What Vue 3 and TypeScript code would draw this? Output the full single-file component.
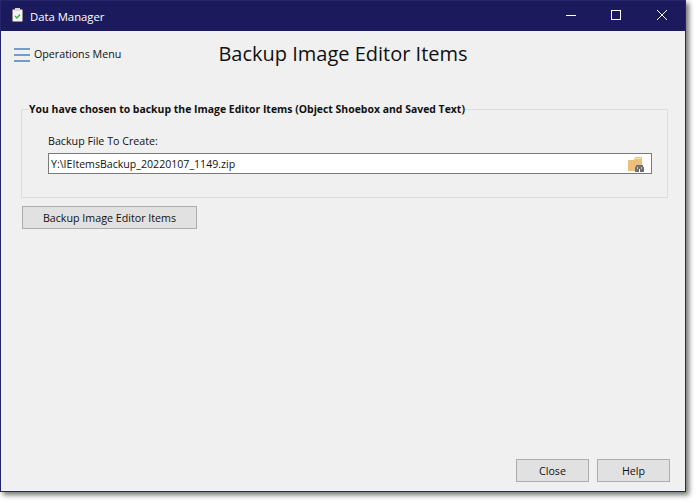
<script setup lang="ts">
const title = 'Backup Image Editor Items';
const filePath = 'Y:\\IEItemsBackup_20220107_1149.zip';
</script>

<template>
  <div class="page">
    <div class="window">
      <div class="titlebar">
        <svg class="app-icon" width="12" height="14" viewBox="0 0 12 14">
          <rect x="0.5" y="1.5" width="10" height="12" rx="1" fill="#f4f4f4" stroke="#8c8c8c" />
          <rect x="3" y="0" width="5" height="3" fill="#d8d8d8" />
          <path d="M3 8l2 2 3-3.500" fill="none" stroke="#3fae49" stroke-width="1.400" />
        </svg>
        <span class="app-name">Data Manager</span>
        <div class="controls">
          <svg width="46" height="30" viewBox="0 0 46 30"><path d="M18 14.500h10" stroke="#fff" /></svg>
          <svg width="46" height="30" viewBox="0 0 46 30"><rect x="17.500" y="9.500" width="9" height="9" fill="none" stroke="#fff" /></svg>
          <svg width="46" height="30" viewBox="0 0 46 30"><path d="M17 9l10 10M27 9L17 19" stroke="#fff" /></svg>
        </div>
      </div>

      <div class="content">
        <div class="header">
          <button class="menu-btn" type="button">
            <span class="burger"><i></i><i></i><i></i></span>
            <span>Operations Menu</span>
          </button>
          <h1>{{ title }}</h1>
        </div>

        <fieldset class="group">
          <legend>You have chosen to backup the Image Editor Items (Object Shoebox and Saved Text)</legend>
          <label class="field-label">Backup File To Create:</label>
          <div class="file-input">
            <span>{{ filePath }}</span>
            <svg class="browse" width="17" height="16" viewBox="0 0 17 16">
              <path d="M0 5q0-1 1-1h5l1-2h7v13H0z" fill="#ecc07a" />
              <path d="M6.500 3l1-1.500h6v1.500" fill="#f8e6c4" stroke="#ecc07a" />
              <rect x="7" y="11" width="4" height="5" fill="#6f6f6f" />
              <rect x="12" y="11" width="4" height="5" fill="#6f6f6f" />
              <rect x="8" y="9" width="7" height="4" fill="#6f6f6f" />
              <rect x="11" y="13" width="1" height="3" fill="#fff" />
              <rect x="9" y="11" width="1" height="2" fill="#c8c8c8" />
              <rect x="13" y="11" width="1" height="2" fill="#c8c8c8" />
            </svg>
          </div>
        </fieldset>

        <button class="btn wide" type="button">{{ title }}</button>

        <div class="footer">
          <button class="btn small" type="button">Close</button>
          <button class="btn small" type="button">Help</button>
        </div>
      </div>
    </div>
  </div>
</template>

<style>
html, body { background: #fff; overflow: hidden; }
</style>

<style scoped>
.page {
  width: 696px;
  height: 503px;
  font-family: "Open Sans", "Noto Sans", sans-serif;
  font-size: 10.7px;
  color: #111;
}
.window {
  width: 686px;
  height: 492px;
  box-sizing: border-box;
  border: 1px solid #26266e;
  background: #f0f0f0;
  display: flex;
  flex-direction: column;
  box-shadow: 3px 3px 5px rgba(0, 0, 0, 0.55);
}
.titlebar {
  height: 30px;
  flex: none;
  background: #1a1a5c;
  display: flex;
  align-items: center;
  padding-left: 11px;
  color: #fff;
}
.app-icon { margin-right: 6px; margin-top: -3px; }
.app-name { font-size: 11.3px; }
.controls { margin-left: auto; margin-right: -1px; display: flex; }
.controls svg { display: block; }
.content {
  flex: 1;
  display: flex;
  flex-direction: column;
  padding: 10px 15px 9px 20px;
  min-height: 0;
}
.header {
  height: 24px;
  position: relative;
  display: flex;
  align-items: center;
  justify-content: center;
}
.menu-btn {
  position: absolute;
  left: -7px;
  top: 4px;
  display: flex;
  align-items: center;
  gap: 4px;
  padding: 0;
  border: 0;
  background: none;
  font: inherit;
  color: #111;
}
.burger { display: flex; flex-direction: column; gap: 4px; margin-top: 3px; }
.burger i { display: block; width: 16px; height: 2px; background: #6f9fc8; }
h1 {
  margin: 0 0 0 -5px;
  font-size: 20px;
  font-weight: 400;
  color: #111;
}
.group {
  margin: 37px 2px 0 0;
  padding: 0 0 23px 26px;
  border: 1px solid #dcdcdc;
  min-width: 0;
}
.group legend {
  padding: 0;
  margin-left: -19px;
  font-weight: 700;
  font-size: 10.45px;
}
.field-label { display: block; margin-top: 17px; line-height: 16px; }
.file-input {
  margin: 4px 15px 0 0;
  height: 21px;
  box-sizing: border-box;
  border: 1px solid #7a7a7a;
  background: #fff;
  font-size: 10.6px;
  display: flex;
  align-items: center;
  justify-content: space-between;
  padding: 0 6px 0 2px;
}
.browse { align-self: flex-end; margin-bottom: 1px; }
.btn {
  box-sizing: border-box;
  height: 23px;
  background: #e1e1e1;
  border: 1px solid #adadad;
  padding: 0;
  font: inherit;
  color: #111;
}
.wide { width: 175px; margin: 8px 0 0 1px; }
.footer {
  margin-top: auto;
  display: flex;
  justify-content: flex-end;
  gap: 8px;
}
.small { width: 73px; }
</style>
